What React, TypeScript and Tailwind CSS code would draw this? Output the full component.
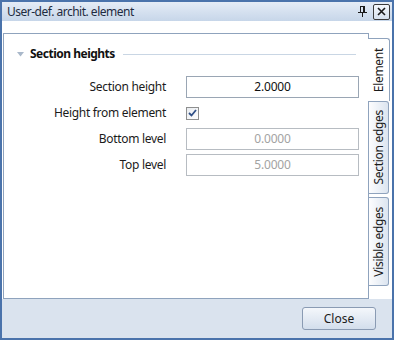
import React from 'react';

const font = { fontFamily: '"Noto Sans", "Open Sans", sans-serif' };

interface FieldRowProps {
  label: string;
  children: React.ReactNode;
}

const FieldRow = ({ label, children }: FieldRowProps) => (
  <div className="flex h-[22px] items-center">
    <div className="w-[162px] text-right text-[12px] tracking-[-0.3px] text-[#1b1b1b]">{label}</div>
    <div className="ml-[20px] flex h-full w-[173px] items-center">{children}</div>
  </div>
);

const ValueBox = ({ value, disabled }: { value: string; disabled?: boolean }) => (
  <div
    className={
      disabled
        ? 'flex h-full w-full items-center justify-center border border-[#b7bcc2] bg-white text-[12px] tracking-[-0.2px] text-[#a3a3a3]'
        : 'flex h-full w-full items-center justify-center border border-[#9aa6b4] bg-white text-[12px] tracking-[-0.2px] text-[#101010]'
    }
  >
    {value}
  </div>
);

const PinIcon = () => (
  <svg width="9" height="11" viewBox="0 0 9 11" shapeRendering="crispEdges">
    <rect x="0" y="6" width="9" height="1" fill="#1a1a1a" />
    <rect x="2" y="0" width="5" height="1" fill="#1a1a1a" />
    <rect x="2" y="0" width="1" height="6" fill="#1a1a1a" />
    <rect x="5" y="0" width="2" height="6" fill="#1a1a1a" />
    <rect x="4" y="7" width="1" height="4" fill="#1a1a1a" />
  </svg>
);

const SideTab = ({ label, selected, className }: { label: string; selected?: boolean; className: string }) => (
  <div
    className={
      selected
        ? `flex w-[22px] items-center justify-center rounded-tr-[3px] border-t border-r border-[#8fa3bd] bg-white ${className}`
        : `flex w-[20px] items-center justify-center rounded-r-[3px] border-t border-r border-b border-[#8fa3bd] bg-gradient-to-r from-[#fdfdfe] to-[#dce5f0] ${className}`
    }
  >
    <span className="rotate-180 text-[12px] leading-none tracking-[-0.3px] text-[#1b1b1b] [writing-mode:vertical-rl]">
      {label}
    </span>
  </div>
);

const App = () => {
  return (
    <div
      className="flex h-[340px] w-[394px] flex-col border-2 border-[#4a73ab] bg-white select-none"
      style={font}
    >
      {/* title bar */}
      <div className="flex h-[19px] items-center bg-gradient-to-b from-[#e4ecf6] to-[#c7d6e9] pl-[5px] pr-[2px]">
        <span className="text-[12px] tracking-[-0.5px] text-[#1e2b40]">User-def. archit. element</span>
        <div className="ml-auto flex items-center">
          <PinIcon />
          <div className="ml-[6px] flex h-[16px] w-[17px] items-center justify-center rounded-[2px] border border-[#3a3a3a] bg-gradient-to-b from-[#f4f7fb] to-[#d6e1ee]">
            <svg width="9" height="9" viewBox="0 0 9 9">
              <path d="M1 1 L8 8 M8 1 L1 8" stroke="#1a1a1a" strokeWidth="1.6" />
            </svg>
          </div>
        </div>
      </div>

      {/* body */}
      <div className="flex h-[278px] pl-[1px] pt-[12px]">
        <div className="flex w-[365px] flex-col border-t border-b border-l border-[#8fa3bd] pt-[11px]">
          <div className="flex h-[18px] items-center">
            <svg className="ml-[13px]" width="7" height="5" viewBox="0 0 7 5">
              <path d="M0 0 H7 L3.5 4.5 Z" fill="#a9b8ca" />
            </svg>
            <span className="ml-[6px] text-[12px] font-bold tracking-[-0.5px] text-[#111]">Section heights</span>
            <div className="ml-[8px] mr-[12px] h-px flex-1 bg-[#c9d6e4]" />
          </div>
          <div className="mt-[13px] flex flex-col gap-[4px]">
            <FieldRow label="Section height">
              <ValueBox value="2.0000" />
            </FieldRow>
            <FieldRow label="Height from element">
              <div className="flex h-[13px] w-[13px] items-center justify-center border border-[#8e8f8f] bg-gradient-to-br from-[#e9ecf0] to-[#fdfdfd]">
                <svg width="9" height="8" viewBox="0 0 9 8">
                  <path d="M1 4 L3.5 6.5 L8 1" fill="none" stroke="#2f4f86" strokeWidth="1.8" />
                </svg>
              </div>
            </FieldRow>
            <FieldRow label="Bottom level">
              <ValueBox value="0.0000" disabled />
            </FieldRow>
            <FieldRow label="Top level">
              <ValueBox value="5.0000" disabled />
            </FieldRow>
          </div>
        </div>

        {/* side tabs */}
        <div className="flex flex-col">
          <div className="h-[5px] w-[1px] border-l border-[#8fa3bd]" />
          <SideTab label="Element" selected className="h-[63px]" />
          <div className="flex flex-1 flex-col border-l border-[#8fa3bd]">
            <SideTab label="Section edges" className="h-[93px]" />
            <SideTab label="Visible edges" className="mt-[3px] h-[89px]" />
          </div>
        </div>
      </div>

      {/* footer */}
      <div className="flex flex-1 items-start justify-end bg-[#dae3ee] pr-[16px] pt-[8px]">
        <button className="flex h-[23px] w-[74px] items-center justify-center rounded-[3px] border border-[#8a9bb3] bg-gradient-to-b from-[#f4f7fb] to-[#d3deec] text-[12px] text-[#1b1b1b]">
          Close
        </button>
      </div>
    </div>
  );
};

export default App;
